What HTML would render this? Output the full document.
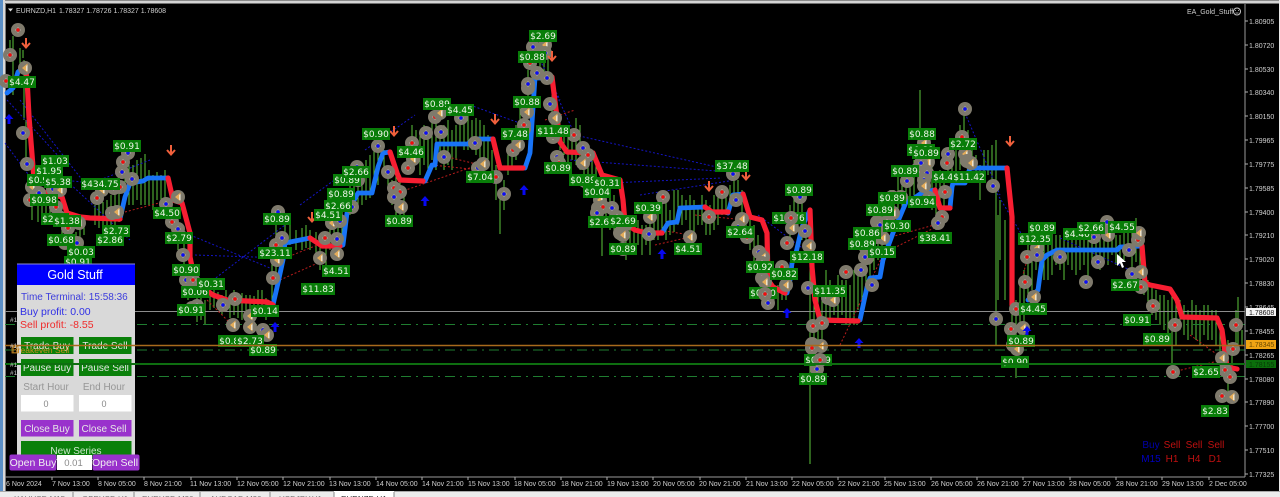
<!DOCTYPE html>
<html><head><meta charset="utf-8"><title>EURNZD,H1</title>
<style>
html,body{margin:0;padding:0;background:#000;width:1280px;height:497px;overflow:hidden}
svg{display:block;filter:blur(.35px)}
text{font-family:"Liberation Sans",sans-serif}
.l rect,rect.l{width:28px;height:12px;fill:#087d08}
rect.w6{width:34px}
rect.w7{width:39px}
text.t{font-family:"DejaVu Sans","Liberation Sans",sans-serif;font-size:9px;fill:#f0f6ea;text-anchor:middle}
.a{font-size:7px;fill:#d0d0d0}
.b{font-size:10px;fill:#e6e6e6;text-anchor:middle}
</style></head><body>
<svg width="1280" height="497" viewBox="0 0 1280 497" xmlns="http://www.w3.org/2000/svg">
<defs>
<g id="b"><circle r="7" fill="#7f7a6c"/><path d="M-2.500 0H2.500M0-2.500V2.500" stroke="#e8e8f0" stroke-width="1.100"/><path d="M0-2.200L2.200 0L0 2.200L-2.200 0Z" fill="#0c0cf4"/></g>
<g id="r"><circle r="7" fill="#7f7a6c"/><path d="M-2.500 0H2.500M0-2.500V2.500" stroke="#f0e8e8" stroke-width="1.100"/><path d="M0-2.200L2.200 0L0 2.200L-2.200 0Z" fill="#f00c0c"/></g>
<g id="y"><circle r="7" fill="#7f7a6c"/><path d="M2.500-4.500L-3 0L2.500 4.500Z" fill="#e4ac5a"/><path d="M2.500-3V3L1.200 3V-2Z" fill="#f4f0e0"/></g>
<path id="d" d="M0-5V4M-4 0L0 4.500L4 0" fill="none" stroke="#f0603c" stroke-width="2"/>
<path id="u" d="M0-5L4.500 0H1.500V5H-1.500V0H-4.500Z" fill="#0808f0"/>
</defs>

<rect width="1280" height="497" fill="#000"/>
<rect width="1280" height="4" fill="#d4d4d4"/>
<rect y="0" width="1280" height="1" fill="#8a8a8a"/>
<rect y="3" width="1280" height="1" fill="#707070"/>
<rect width="3" height="497" fill="#5b8fc6"/>
<rect x="3" width="2" height="497" fill="#d8d8d8"/>
<rect x="5" y="4" width="1" height="488" fill="#7a7a7a"/>
<rect x="1279" width="1" height="497" fill="#e8e8e8"/>

<!-- candles -->
<path fill="none" stroke="#5cc63c" stroke-width="1" d="M10 40V62M13 36V95M20 48V64M23 50V58M24 60V120M26 120V160M32 195V220M38 205V222M42 205V218M46 205V220M50 205V222M54 200V225M58 205V225M62 215V240M68 225V250M72 230V250M76 232V255M80 225V250M84 215V235M95 205V225M99 200V228M103 202V235M107 200V232M111 195V235M115 190V228M119 180V222M125 155V205M129 165V205M133 165V205M137 160V200M141 158V205M145 154V205M149 170V205M153 175V210M157 172V200M161 175V205M165 170V200M172 195V225M178 215V250M184 240V270M188 265V300M197 296V322M201 298V320M205 300V325M210 290V310M214 290V308M218 292V310M222 295V315M226 290V312M230 295V318M234 290V315M238 295V318M242 293V320M246 295V320M250 295V330M254 296V325M258 290V310M262 290V315M266 298V320M272 240V300M276 225V290M285 215V245M290 225V245M296 230V250M302 228V250M306 225V248M310 230V250M316 232V262M320 235V270M326 232V265M330 225V250M334 215V240M338 205V250M342 200V245M346 190V230M350 180V215M354 175V212M358 170V205M362 165V205M366 160V200M370 155V198M374 148V190M378 140V185M384 150V175M388 165V190M392 180V205M396 170V215M400 178V215M404 195V215M408 140V170M412 125V165M416 130V165M420 135V175M424 125V165M428 130V170M432 120V160M436 120V170M440 130V160M444 125V170M448 120V165M452 130V170M456 125V160M460 110V145M464 120V150M468 115V150M472 120V150M476 118V155M480 120V165M484 125V170M488 135V165M492 150V180M496 165V200M500 197V234M504 180V210M508 150V175M512 140V170M516 125V160M520 105V135M524 100V140M528 70V110M532 65V100M536 45V80M540 40V75M544 55V80M548 50V75M552 95V125M556 100V130M560 120V150M564 125V155M568 135V165M572 130V160M576 118V165M580 125V170M584 150V185M588 150V180M592 155V190M596 165V200M600 190V215M602 205V256M606 185V225M610 190V230M614 195V235M618 205V240M622 210V255M626 215V260M630 225V255M634 215V250M638 220V245M642 225V255M646 225V245M650 210V255M654 205V240M658 200V240M662 195V235M666 195V240M670 210V235M674 190V232M678 190V225M682 195V225M686 200V220M690 195V235M694 200V235M698 205V225M702 195V225M706 200V235M710 205V235M714 195V230M718 190V225M722 185V215M726 190V215M730 185V210M734 175V200M738 180V200M742 190V225M746 215V240M750 215V250M754 225V262M758 235V270M762 250V285M766 265V300M770 270V300M774 285V305M778 285V310M782 280V300M786 270V300M790 205V240M794 195V225M798 185V225M802 200V240M806 215V245M810 260V464M814 285V340M818 290V350M822 285V345M826 270V320M830 280V320M834 285V315M838 275V320M842 280V315M846 280V325M850 285V325M854 270V325M858 275V310M862 270V300M866 250V285M870 245V290M874 230V270M878 215V260M882 215V250M886 205V245M890 190V230M894 190V225M898 175V220M902 170V210M906 170V200M910 165V200M914 160V195M920 90V135M924 135V195M928 150V200M932 160V210M936 175V230M940 170V225M944 175V225M948 150V180M952 145V180M956 145V175M960 125V170M964 115V150M968 130V170M972 145V170M976 155V175M980 165V200M984 150V180M988 150V175M992 145V190M996 140V345M998 215V300M1000 200V260M1005 220V300M1012 305V330M1016 300V378M1020 280V345M1024 270V340M1028 240V300M1032 235V290M1036 225V270M1040 225V270M1044 225V280M1048 230V280M1052 225V275M1056 235V265M1060 235V270M1064 235V280M1068 235V265M1072 240V270M1076 235V275M1080 240V270M1084 240V265M1088 235V280M1092 230V260M1096 230V265M1100 235V270M1104 225V260M1108 230V265M1112 232V255M1116 235V265M1120 235V260M1124 230V260M1128 225V255M1132 225V270M1136 218V262M1140 240V280M1144 265V295M1148 280V310M1152 285V315M1156 290V320M1160 295V325M1164 295V330M1168 300V335M1172 295V370M1176 300V345M1180 300V330M1184 305V335M1188 310V340M1192 300V335M1196 305V340M1200 310V345M1204 305V335M1208 305V340M1212 310V340M1216 310V345M1220 320V355M1224 330V375M1228 340V395M1232 350V380M1236 310V350M1238 297V345M1242 330V345"/>

<!-- horizontal levels -->
<path d="M5 311.500H1245" stroke="#8c8c8c"/>
<path d="M5 324.500H1245M5 350H1245M5 376.500H1245" stroke="#1f7d30" stroke-dasharray="10 5 2 5"/>

<!-- dotted lines -->
<g fill="none" stroke-width="1" stroke-dasharray="2 2">
<path stroke="#1414c4" d="M7 100L62 160M5 143L62 220M50 165L130 240M122 187L40 177M575 135L730 170M570 160L730 172M610 183L722 178M640 195L735 180M965 113L1000 195M995 190L1025 240M552 85L575 135M195 255L283 258M190 235L270 268M200 290L285 225M300 205L355 165M20 100L90 190M365 150L415 115M470 105L525 125M758 215L805 250M1060 238L1130 270M540 60L560 100M100 180L150 160"/>
<path stroke="#b81c1c" d="M400 192L478 165M440 155L480 165M432 165L480 170M125 212L170 200M655 245L690 237M660 230L690 235M880 240L945 222M890 250L940 225M1173 372L1222 360M1190 335L1222 358M840 345L890 240M207 300L232 325M280 280L320 262M285 258L330 240M545 120L575 110M695 215L745 220M1020 285L1030 250"/>
</g>

<!-- trend lines -->
<g fill="none" stroke-linejoin="round" stroke-linecap="round">
<g stroke="#1874f8" stroke-width="4.800">
<path d="M7 93L13 88L18 72L23 68"/>
<path d="M120 219L125 197L130 183L143 181L148 178L168 178"/>
<path d="M273 305L278 283L283 260L285 243L300 240L310 238"/>
<path d="M340 246L343 245L347 213L358 193L372 193L378 167L383 153L390 152"/>
<path d="M425 181L432 165L435 165L437 144L468 144L473 139L493 139"/>
<path d="M525 168L530 153L535 78L548 78"/>
<path d="M662 233L668 223L677 222L680 208L705 207"/>
<path d="M728 213L733 195L743 194"/>
<path d="M787 293L790 280L792 263L795 257L802 227L810 210"/>
<path d="M860 320L867 287L870 278L880 277L883 260L893 233L907 200L913 199L923 192L935 190"/>
<path d="M950 208L952 187L953 183L965 183L970 168L1007 168"/>
<path d="M1028 300L1038 290L1042 260L1047 255L1057 250L1117 250L1120 247L1142 246"/>
</g>
<g stroke="#f81e32" stroke-width="5.200">
<path d="M25 68L27 78L29 117L33 167L35 190L62 197L67 213L80 217L90 218L120 219"/>
<path d="M168 178L173 200L182 203L190 233L190 257L195 282L213 295L227 300L267 302L273 305"/>
<path d="M310 238L322 246L340 246"/>
<path d="M390 152L397 173L400 180L423 181"/>
<path d="M493 139L500 168L523 168"/>
<path d="M548 78L552 77L560 142L567 152L593 153L602 175L620 180L623 200L625 223L635 230L647 233L662 233"/>
<path d="M705 207L712 212L728 212"/>
<path d="M743 194L750 217L762 220L767 233L768 280L773 287L785 293"/>
<path d="M810 210L812 267L815 300L820 320L858 321"/>
<path d="M935 190L940 208L950 208"/>
<path d="M1007 168L1012 217L1012 305L1017 307"/>
<path d="M1142 246L1145 283L1150 285L1170 289L1177 300L1182 317L1217 318L1222 330L1227 367L1237 369"/>
</g>
</g>

<!-- markers -->
<use href="#r" x="18" y="30"/><use href="#r" x="10" y="55"/><use href="#y" x="25" y="68"/><use href="#r" x="6" y="81"/><use href="#b" x="23" y="133"/><use href="#b" x="27" y="164"/><use href="#r" x="30" y="200"/><use href="#y" x="32" y="187"/><use href="#b" x="39" y="193"/><use href="#b" x="53" y="189"/><use href="#y" x="60" y="190"/><use href="#r" x="56" y="207"/><use href="#b" x="59" y="217"/><use href="#r" x="68" y="228"/><use href="#y" x="79" y="223"/><use href="#b" x="65" y="243"/><use href="#b" x="77" y="243"/><use href="#r" x="97" y="198"/><use href="#y" x="102" y="190"/><use href="#r" x="114" y="188"/><use href="#r" x="120" y="187"/><use href="#r" x="112" y="213"/><use href="#y" x="117" y="212"/><use href="#b" x="128" y="153"/><use href="#r" x="123" y="162"/><use href="#b" x="122" y="172"/><use href="#b" x="132" y="179"/><use href="#y" x="178" y="197"/><use href="#b" x="166" y="204"/><use href="#r" x="172" y="222"/><use href="#b" x="178" y="229"/><use href="#r" x="181" y="237"/><use href="#b" x="278" y="212"/><use href="#b" x="282" y="238"/><use href="#r" x="276" y="245"/><use href="#b" x="183" y="255"/><use href="#b" x="186" y="280"/><use href="#r" x="193" y="280"/><use href="#b" x="192" y="308"/><use href="#b" x="197" y="306"/><use href="#b" x="223" y="305"/><use href="#r" x="235" y="299"/><use href="#y" x="250" y="316"/><use href="#y" x="233" y="325"/><use href="#y" x="250" y="327"/><use href="#b" x="263" y="330"/><use href="#y" x="267" y="335"/><use href="#r" x="273" y="278"/><use href="#y" x="277" y="260"/><use href="#b" x="357" y="167"/><use href="#y" x="358" y="180"/><use href="#b" x="342" y="205"/><use href="#b" x="352" y="207"/><use href="#b" x="333" y="214"/><use href="#y" x="332" y="223"/><use href="#b" x="340" y="221"/><use href="#r" x="325" y="238"/><use href="#b" x="337" y="239"/><use href="#y" x="337" y="254"/><use href="#y" x="320" y="258"/><use href="#b" x="378" y="146"/><use href="#b" x="388" y="172"/><use href="#r" x="394" y="188"/><use href="#r" x="400" y="192"/><use href="#b" x="394" y="197"/><use href="#y" x="401" y="207"/><use href="#r" x="412" y="143"/><use href="#b" x="426" y="133"/><use href="#r" x="408" y="168"/><use href="#y" x="413" y="159"/><use href="#b" x="444" y="157"/><use href="#r" x="435" y="117"/><use href="#y" x="440" y="113"/><use href="#b" x="441" y="132"/><use href="#b" x="461" y="118"/><use href="#b" x="475" y="143"/><use href="#b" x="478" y="168"/><use href="#y" x="483" y="164"/><use href="#r" x="496" y="177"/><use href="#b" x="504" y="194"/><use href="#r" x="513" y="150"/><use href="#y" x="518" y="145"/><use href="#b" x="524" y="129"/><use href="#r" x="524" y="125"/><use href="#y" x="527" y="112"/><use href="#r" x="528" y="88"/><use href="#b" x="528" y="84"/><use href="#b" x="533" y="47"/><use href="#y" x="545" y="45"/><use href="#b" x="545" y="53"/><use href="#r" x="530" y="63"/><use href="#b" x="537" y="73"/><use href="#b" x="547" y="78"/><use href="#b" x="550" y="104"/><use href="#y" x="555" y="118"/><use href="#r" x="553" y="137"/><use href="#b" x="553" y="132"/><use href="#r" x="574" y="135"/><use href="#b" x="557" y="157"/><use href="#r" x="559" y="163"/><use href="#b" x="583" y="148"/><use href="#r" x="588" y="155"/><use href="#y" x="583" y="163"/><use href="#r" x="585" y="181"/><use href="#b" x="593" y="183"/><use href="#y" x="600" y="200"/><use href="#b" x="598" y="208"/><use href="#r" x="603" y="207"/><use href="#b" x="612" y="208"/><use href="#r" x="617" y="217"/><use href="#b" x="597" y="213"/><use href="#r" x="620" y="233"/><use href="#r" x="626" y="224"/><use href="#y" x="623" y="235"/><use href="#r" x="623" y="249"/><use href="#b" x="649" y="234"/><use href="#y" x="650" y="217"/><use href="#r" x="663" y="197"/><use href="#y" x="690" y="237"/><use href="#r" x="709" y="217"/><use href="#r" x="722" y="192"/><use href="#b" x="733" y="174"/><use href="#b" x="736" y="200"/><use href="#y" x="742" y="219"/><use href="#b" x="738" y="227"/><use href="#r" x="747" y="237"/><use href="#b" x="759" y="252"/><use href="#y" x="763" y="257"/><use href="#r" x="797" y="192"/><use href="#b" x="800" y="197"/><use href="#y" x="792" y="228"/><use href="#b" x="805" y="231"/><use href="#r" x="787" y="243"/><use href="#y" x="809" y="246"/><use href="#r" x="762" y="263"/><use href="#b" x="762" y="278"/><use href="#y" x="765" y="282"/><use href="#r" x="782" y="267"/><use href="#y" x="786" y="285"/><use href="#r" x="765" y="294"/><use href="#b" x="768" y="303"/><use href="#b" x="808" y="288"/><use href="#r" x="828" y="298"/><use href="#y" x="833" y="300"/><use href="#r" x="813" y="326"/><use href="#r" x="822" y="323"/><use href="#b" x="812" y="344"/><use href="#r" x="812" y="348"/><use href="#y" x="821" y="346"/><use href="#b" x="817" y="369"/><use href="#r" x="846" y="272"/><use href="#b" x="861" y="270"/><use href="#b" x="872" y="285"/><use href="#b" x="867" y="258"/><use href="#b" x="877" y="222"/><use href="#r" x="887" y="222"/><use href="#y" x="893" y="213"/><use href="#b" x="892" y="197"/><use href="#r" x="901" y="197"/><use href="#b" x="877" y="237"/><use href="#y" x="883" y="238"/><use href="#r" x="866" y="248"/><use href="#b" x="865" y="257"/><use href="#b" x="880" y="225"/><use href="#b" x="907" y="181"/><use href="#r" x="918" y="169"/><use href="#r" x="922" y="172"/><use href="#b" x="927" y="173"/><use href="#b" x="924" y="180"/><use href="#y" x="924" y="186"/><use href="#y" x="928" y="162"/><use href="#b" x="921" y="163"/><use href="#y" x="924" y="143"/><use href="#b" x="929" y="198"/><use href="#r" x="942" y="217"/><use href="#b" x="938" y="223"/><use href="#r" x="945" y="192"/><use href="#r" x="947" y="163"/><use href="#b" x="948" y="154"/><use href="#b" x="965" y="109"/><use href="#r" x="962" y="137"/><use href="#y" x="965" y="154"/><use href="#b" x="967" y="161"/><use href="#y" x="971" y="163"/><use href="#b" x="993" y="186"/><use href="#y" x="1037" y="248"/><use href="#b" x="1037" y="255"/><use href="#r" x="1027" y="257"/><use href="#b" x="1060" y="257"/><use href="#b" x="1094" y="237"/><use href="#b" x="1107" y="222"/><use href="#y" x="1108" y="235"/><use href="#b" x="1098" y="262"/><use href="#b" x="1086" y="282"/><use href="#b" x="1129" y="250"/><use href="#r" x="1138" y="240"/><use href="#y" x="1139" y="233"/><use href="#b" x="1132" y="274"/><use href="#y" x="1141" y="272"/><use href="#r" x="1141" y="287"/><use href="#r" x="1025" y="282"/><use href="#y" x="1034" y="297"/><use href="#r" x="1016" y="309"/><use href="#b" x="996" y="319"/><use href="#r" x="1011" y="329"/><use href="#y" x="1023" y="328"/><use href="#b" x="1013" y="345"/><use href="#y" x="1017" y="349"/><use href="#r" x="1153" y="306"/><use href="#r" x="1175" y="325"/><use href="#r" x="1173" y="372"/><use href="#y" x="1222" y="358"/><use href="#r" x="1225" y="370"/><use href="#r" x="1230" y="377"/><use href="#r" x="1233" y="349"/><use href="#r" x="1236" y="325"/><use href="#r" x="1222" y="396"/><use href="#y" x="1232" y="397"/>

<!-- arrows -->
<use href="#d" x="26" y="43"/><use href="#d" x="171" y="150"/><use href="#d" x="394" y="131"/><use href="#d" x="312" y="217"/><use href="#d" x="495" y="119"/><use href="#d" x="552" y="56"/><use href="#d" x="709" y="186"/><use href="#d" x="746" y="175"/><use href="#d" x="1010" y="141"/>
<use href="#u" x="9" y="119"/><use href="#u" x="425" y="201"/><use href="#u" x="524" y="190"/><use href="#u" x="662" y="254"/><use href="#u" x="787" y="313"/><use href="#u" x="859" y="343"/><use href="#u" x="1027" y="331"/><use href="#u" x="275" y="327"/>

<!-- labels -->
<rect class="l" x="8" y="76"/><text class="t" x="22" y="85">$4.47</text>
<rect class="l" x="41" y="155"/><text class="t" x="55" y="164">$1.03</text>
<rect class="l" x="35" y="165"/><text class="t" x="49" y="174">$1.95</text>
<rect class="l" x="27" y="174"/><text class="t" x="41" y="183">$0.98</text>
<rect class="l" x="44" y="176"/><text class="t" x="58" y="185">$5.38</text>
<rect class="l w7" x="81" y="178"/><text class="t" x="100" y="187">$434.75</text>
<rect class="l" x="30" y="194"/><text class="t" x="44" y="203">$0.98</text>
<rect class="l" x="41" y="213"/><text class="t" x="55" y="222">$2.73</text>
<rect class="l" x="53" y="215"/><text class="t" x="67" y="224">$1.38</text>
<rect class="l" x="102" y="225"/><text class="t" x="116" y="234">$2.73</text>
<rect class="l" x="96" y="234"/><text class="t" x="110" y="243">$2.86</text>
<rect class="l" x="47" y="234"/><text class="t" x="61" y="243">$0.68</text>
<rect class="l" x="67" y="246"/><text class="t" x="81" y="255">$0.03</text>
<rect class="l" x="64" y="256"/><text class="t" x="78" y="265">$0.91</text>
<rect class="l" x="113" y="140"/><text class="t" x="127" y="149">$0.91</text>
<rect class="l" x="153" y="207"/><text class="t" x="167" y="216">$4.50</text>
<rect class="l" x="165" y="232"/><text class="t" x="179" y="241">$2.79</text>
<rect class="l" x="263" y="213"/><text class="t" x="277" y="222">$0.89</text>
<rect class="l w6" x="258" y="247"/><text class="t" x="275" y="256">$23.11</text>
<rect class="l" x="172" y="264"/><text class="t" x="186" y="273">$0.90</text>
<rect class="l" x="181" y="286"/><text class="t" x="195" y="295">$0.06</text>
<rect class="l" x="197" y="278"/><text class="t" x="211" y="287">$0.31</text>
<rect class="l" x="177" y="304"/><text class="t" x="191" y="313">$0.91</text>
<rect class="l" x="251" y="305"/><text class="t" x="265" y="314">$0.14</text>
<rect class="l" x="218" y="335"/><text class="t" x="232" y="344">$0.89</text>
<rect class="l" x="236" y="335"/><text class="t" x="250" y="344">$2.73</text>
<rect class="l" x="249" y="344"/><text class="t" x="263" y="353">$0.89</text>
<rect class="l" x="322" y="265"/><text class="t" x="336" y="274">$4.51</text>
<rect class="l w6" x="301" y="283"/><text class="t" x="318" y="292">$11.83</text>
<rect class="l" x="362" y="128"/><text class="t" x="376" y="137">$0.90</text>
<rect class="l" x="333" y="174"/><text class="t" x="347" y="183">$0.89</text>
<rect class="l" x="342" y="166"/><text class="t" x="356" y="175">$2.66</text>
<rect class="l" x="327" y="188"/><text class="t" x="341" y="197">$0.89</text>
<rect class="l" x="324" y="200"/><text class="t" x="338" y="209">$2.66</text>
<rect class="l" x="314" y="209"/><text class="t" x="328" y="218">$4.51</text>
<rect class="l" x="397" y="146"/><text class="t" x="411" y="155">$4.46</text>
<rect class="l" x="423" y="98"/><text class="t" x="437" y="107">$0.89</text>
<rect class="l" x="446" y="104"/><text class="t" x="460" y="113">$4.45</text>
<rect class="l" x="466" y="171"/><text class="t" x="480" y="180">$7.04</text>
<rect class="l" x="385" y="215"/><text class="t" x="399" y="224">$0.89</text>
<rect class="l" x="501" y="128"/><text class="t" x="515" y="137">$7.48</text>
<rect class="l" x="513" y="96"/><text class="t" x="527" y="105">$0.88</text>
<rect class="l w6" x="536" y="125"/><text class="t" x="553" y="134">$11.48</text>
<rect class="l" x="529" y="30"/><text class="t" x="543" y="39">$2.69</text>
<rect class="l" x="518" y="51"/><text class="t" x="532" y="60">$0.88</text>
<rect class="l" x="544" y="162"/><text class="t" x="558" y="171">$0.89</text>
<rect class="l" x="569" y="174"/><text class="t" x="583" y="183">$0.89</text>
<rect class="l" x="593" y="177"/><text class="t" x="607" y="186">$0.31</text>
<rect class="l" x="583" y="186"/><text class="t" x="597" y="195">$0.04</text>
<rect class="l" x="588" y="216"/><text class="t" x="602" y="225">$2.69</text>
<rect class="l" x="609" y="215"/><text class="t" x="623" y="224">$2.69</text>
<rect class="l" x="609" y="243"/><text class="t" x="623" y="252">$0.89</text>
<rect class="l" x="634" y="202"/><text class="t" x="648" y="211">$0.39</text>
<rect class="l" x="674" y="243"/><text class="t" x="688" y="252">$4.51</text>
<rect class="l w6" x="715" y="160"/><text class="t" x="732" y="169">$37.48</text>
<rect class="l" x="726" y="226"/><text class="t" x="740" y="235">$2.64</text>
<rect class="l" x="785" y="184"/><text class="t" x="799" y="193">$0.89</text>
<rect class="l w6" x="772" y="212"/><text class="t" x="789" y="221">$11.76</text>
<rect class="l w6" x="790" y="251"/><text class="t" x="807" y="260">$12.18</text>
<rect class="l" x="746" y="261"/><text class="t" x="760" y="270">$0.92</text>
<rect class="l" x="770" y="268"/><text class="t" x="784" y="277">$0.82</text>
<rect class="l" x="749" y="287"/><text class="t" x="763" y="296">$0.90</text>
<rect class="l w6" x="813" y="285"/><text class="t" x="830" y="294">$11.35</text>
<rect class="l" x="804" y="354"/><text class="t" x="818" y="363">$0.89</text>
<rect class="l" x="799" y="373"/><text class="t" x="813" y="382">$0.89</text>
<rect class="l" x="883" y="220"/><text class="t" x="897" y="229">$0.30</text>
<rect class="l" x="848" y="238"/><text class="t" x="862" y="247">$0.89</text>
<rect class="l" x="853" y="227"/><text class="t" x="867" y="236">$0.86</text>
<rect class="l" x="868" y="246"/><text class="t" x="882" y="255">$0.15</text>
<rect class="l" x="866" y="204"/><text class="t" x="880" y="213">$0.89</text>
<rect class="l" x="878" y="192"/><text class="t" x="892" y="201">$0.89</text>
<rect class="l" x="908" y="196"/><text class="t" x="922" y="205">$0.94</text>
<rect class="l" x="891" y="165"/><text class="t" x="905" y="174">$0.89</text>
<rect class="l" x="908" y="128"/><text class="t" x="922" y="137">$0.88</text>
<rect class="l" x="907" y="144"/><text class="t" x="921" y="153">$0.89</text>
<rect class="l" x="912" y="147"/><text class="t" x="926" y="156">$0.89</text>
<rect class="l" x="932" y="171"/><text class="t" x="946" y="180">$4.45</text>
<rect class="l w6" x="918" y="232"/><text class="t" x="935" y="241">$38.41</text>
<rect class="l" x="949" y="138"/><text class="t" x="963" y="147">$2.72</text>
<rect class="l w6" x="952" y="171"/><text class="t" x="969" y="180">$11.42</text>
<rect class="l" x="1028" y="222"/><text class="t" x="1042" y="231">$0.89</text>
<rect class="l w6" x="1018" y="233"/><text class="t" x="1035" y="242">$12.35</text>
<rect class="l" x="1063" y="228"/><text class="t" x="1077" y="237">$4.40</text>
<rect class="l" x="1077" y="222"/><text class="t" x="1091" y="231">$2.66</text>
<rect class="l" x="1108" y="221"/><text class="t" x="1122" y="230">$4.55</text>
<rect class="l" x="1019" y="303"/><text class="t" x="1033" y="312">$4.45</text>
<rect class="l" x="1007" y="335"/><text class="t" x="1021" y="344">$0.89</text>
<rect class="l" x="1001" y="356"/><text class="t" x="1015" y="365">$0.90</text>
<rect class="l" x="1111" y="279"/><text class="t" x="1125" y="288">$2.67</text>
<rect class="l" x="1123" y="314"/><text class="t" x="1137" y="323">$0.91</text>
<rect class="l" x="1143" y="333"/><text class="t" x="1157" y="342">$0.89</text>
<rect class="l" x="1192" y="366"/><text class="t" x="1206" y="375">$2.65</text>
<rect class="l" x="1201" y="405"/><text class="t" x="1215" y="414">$2.83</text>

<!-- a few markers drawn over labels -->
<use href="#r" x="820" y="360"/><use href="#r" x="791" y="218"/><use href="#r" x="765" y="294"/>

<!-- cursor -->
<path d="M1117 254V266L1120 263L1122 268L1124 267L1122 262H1126Z" fill="#fff"/>

<!-- top info -->
<path d="M8 8.500H13L10.500 11.500Z" fill="#e0e0e0"/>
<text class="a" x="16" y="13">EURNZD,H1</text>
<text class="a" x="59" y="13">1.78327 1.78726 1.78327 1.78608</text>
<text class="a" x="1187" y="14">EA_Gold_Stuff</text>
<circle cx="1237" cy="11.500" r="3.500" fill="none" stroke="#c8c8c8"/><path d="M1235 10.500H1236M1238 10.500H1239M1235.500 13H1238.500" stroke="#c8c8c8" stroke-width=".8"/>

<!-- price axis -->
<path d="M1245 4V477M5 477H1245" stroke="#9a9a9a"/>
<path d="M1245 21h3M1245 45h3M1245 69h3M1245 92h3M1245 116h3M1245 140h3M1245 164h3M1245 188h3M1245 212h3M1245 235h3M1245 259h3M1245 283h3M1245 307h3M1245 331h3M1245 355h3M1245 379h3M1245 402h3M1245 426h3M1245 450h3M1245 474h3" stroke="#b0b0b0"/>
<path d="M52 477v3M98 477v3M144 477v3M191 477v3M237 477v3M283 477v3M330 477v3M376 477v3M422 477v3M468 477v3M515 477v3M561 477v3M607 477v3M653 477v3M700 477v3M746 477v3M792 477v3M838 477v3M885 477v3M931 477v3M977 477v3M1023 477v3M1070 477v3M1116 477v3M1162 477v3M1209 477v3" stroke="#b0b0b0"/>
<g class="a">
<text class="a" x="1249" y="24">1.80905</text><text class="a" x="1249" y="48">1.80720</text><text class="a" x="1249" y="72">1.80530</text><text class="a" x="1249" y="95">1.80340</text><text class="a" x="1249" y="119">1.80150</text><text class="a" x="1249" y="143">1.79965</text><text class="a" x="1249" y="167">1.79775</text><text class="a" x="1249" y="191">1.79585</text><text class="a" x="1249" y="215">1.79400</text><text class="a" x="1249" y="238">1.79210</text><text class="a" x="1249" y="262">1.79020</text><text class="a" x="1249" y="286">1.78830</text><text class="a" x="1249" y="310">1.78645</text><text class="a" x="1249" y="334">1.78455</text><text class="a" x="1249" y="358">1.78265</text><text class="a" x="1249" y="382">1.78080</text><text class="a" x="1249" y="405">1.77890</text><text class="a" x="1249" y="429">1.77700</text><text class="a" x="1249" y="453">1.77510</text><text class="a" x="1249" y="477">1.77325</text>
</g>
<rect x="1246" y="308" width="30" height="8" fill="#f4f4f4"/><text x="1249" y="315" style="font-size:7px;fill:#111">1.78608</text>
<rect x="1246" y="340" width="30" height="9" fill="#f0a414"/><text x="1249" y="347" style="font-size:7px;fill:#6a4a00">1.78345</text>
<rect x="1246" y="360" width="30" height="8" fill="#0b6e0b"/><text x="1249" y="367" style="font-size:7px;fill:#083c08">1.78155</text>

<!-- time axis -->
<text class="a" x="6" y="486">6 Nov 2024</text><text class="a" x="52" y="486">7 Nov 13:00</text><text class="a" x="98" y="486">8 Nov 05:00</text><text class="a" x="144" y="486">8 Nov 21:00</text><text class="a" x="190" y="486">11 Nov 13:00</text><text class="a" x="237" y="486">12 Nov 05:00</text><text class="a" x="283" y="486">12 Nov 21:00</text><text class="a" x="329" y="486">13 Nov 13:00</text><text class="a" x="376" y="486">14 Nov 05:00</text><text class="a" x="422" y="486">14 Nov 21:00</text><text class="a" x="468" y="486">15 Nov 13:00</text><text class="a" x="514" y="486">18 Nov 05:00</text><text class="a" x="561" y="486">18 Nov 21:00</text><text class="a" x="607" y="486">19 Nov 13:00</text><text class="a" x="653" y="486">20 Nov 05:00</text><text class="a" x="699" y="486">20 Nov 21:00</text><text class="a" x="746" y="486">21 Nov 13:00</text><text class="a" x="792" y="486">22 Nov 05:00</text><text class="a" x="838" y="486">22 Nov 21:00</text><text class="a" x="884" y="486">25 Nov 13:00</text><text class="a" x="931" y="486">26 Nov 05:00</text><text class="a" x="977" y="486">26 Nov 21:00</text><text class="a" x="1023" y="486">27 Nov 13:00</text><text class="a" x="1069" y="486">28 Nov 05:00</text><text class="a" x="1116" y="486">28 Nov 21:00</text><text class="a" x="1162" y="486">29 Nov 13:00</text><text class="a" x="1209" y="486">2 Dec 05:00</text>

<!-- tab bar -->
<rect y="491" width="1280" height="6" fill="#ececec"/>
<rect y="491" width="1280" height="1" fill="#a8a8a8"/>
<rect x="334" y="491" width="60" height="6" fill="#fff"/>
<path d="M73 492V497M134 492V497M200 492V497M270 492V497M334 492V497M394 492V497" stroke="#888"/>
<g style="font-size:8px;fill:#777">
<text x="14" y="502">XAUUSD,M15</text><text x="82" y="502">GBPUSD,H1</text><text x="142" y="502">EURUSD,M30</text><text x="210" y="502">AUDCAD,M30</text><text x="279" y="502">USDJPY,H1</text><text x="341" y="502" style="fill:#333">EURNZD,H1</text>
</g>

<!-- signal table -->
<g style="font-size:10px" text-anchor="middle">
<text x="1151" y="448" fill="#0000a8">Buy</text><text x="1172" y="448" fill="#c01010">Sell</text><text x="1194" y="448" fill="#c01010">Sell</text><text x="1216" y="448" fill="#c01010">Sell</text>
<text x="1151" y="462" fill="#0000c0">M15</text><text x="1172" y="462" fill="#c01010">H1</text><text x="1194" y="462" fill="#c01010">H4</text><text x="1215" y="462" fill="#c01010">D1</text>
</g>

<!-- panel -->
<rect x="17" y="264" width="118" height="196" fill="#d9d9d9"/>
<rect x="17" y="264" width="118" height="21" fill="#0000ff"/>
<path d="M17 264H135" stroke="#8a8ad0"/>
<text x="75" y="279" text-anchor="middle" style="font-size:12.500px;fill:#fff">Gold Stuff</text>
<text x="21" y="300" style="font-size:10px;fill:#3c3cdc">Time Terminal: 15:58:36</text>
<text x="20" y="315" style="font-size:10.500px;fill:#3030e6">Buy profit: 0.00</text>
<text x="20" y="328" style="font-size:10.500px;fill:#f02a2a">Sell profit: -8.55</text>
<g fill="#0a800a">
<rect x="21" y="337" width="52.500" height="17"/><rect x="79" y="337" width="52.500" height="17"/>
<rect x="21" y="359" width="52.500" height="17"/><rect x="79" y="359" width="52.500" height="17"/>
<rect x="21" y="441" width="110.500" height="18"/>
</g>
<text class="b" x="47" y="349">Trade Buy</text><text class="b" x="105" y="349">Trade Sell</text>
<text class="b" x="47" y="371">Pause Buy</text><text class="b" x="105" y="371">Pause Sell</text>
<text x="46" y="390" text-anchor="middle" style="font-size:10px;fill:#969696">Start Hour</text>
<text x="104" y="390" text-anchor="middle" style="font-size:10px;fill:#969696">End Hour</text>
<rect x="21" y="395" width="52.500" height="16.500" fill="#fff"/><rect x="79" y="395" width="52.500" height="16.500" fill="#fff"/>
<text x="46" y="407" text-anchor="middle" style="font-size:9px;fill:#888">0</text><text x="104" y="407" text-anchor="middle" style="font-size:9px;fill:#888">0</text>
<rect x="21" y="420" width="52.500" height="16.500" fill="#9932cc"/><rect x="79" y="420" width="52.500" height="16.500" fill="#9932cc"/>
<text class="b" x="47" y="432">Close Buy</text><text class="b" x="104" y="432">Close Sell</text>
<text x="76" y="454" text-anchor="middle" style="font-size:10px;fill:#cce8cc">New Series</text>
<rect x="9.500" y="454.500" width="47" height="16" rx="2" fill="#9932cc"/><rect x="92.500" y="454.500" width="47" height="16" rx="2" fill="#9932cc"/>
<rect x="57" y="455" width="35" height="15" fill="#fff"/>
<text x="33" y="466" text-anchor="middle" style="font-size:10.500px;fill:#f0f0f0">Open Buy</text>
<text x="115" y="466" text-anchor="middle" style="font-size:10.500px;fill:#f0f0f0">Open Sell</text>
<text x="73.500" y="466" text-anchor="middle" style="font-size:9.500px;fill:#8a8a8a">0.01</text>

<!-- lines through panel -->
<path d="M5 345.500H1245" stroke="#a86a1c" stroke-width="1.600"/>
<path d="M5 364H1245" stroke="#0e6e10" stroke-width="2"/>
<text x="12" y="353" style="font-size:8.500px;fill:#d08c20">Breakeven Sell</text>
<path d="M12 346.500H18V353H12Z" fill="none" stroke="#c88820" stroke-width=".8"/>
<g style="font-size:6.500px;fill:#c8c8c8"><text x="10" y="322">#1</text><text x="10" y="348">#1</text><text x="10" y="367">#1</text><text x="10" y="375">#1</text></g>
</svg>
</body></html>
